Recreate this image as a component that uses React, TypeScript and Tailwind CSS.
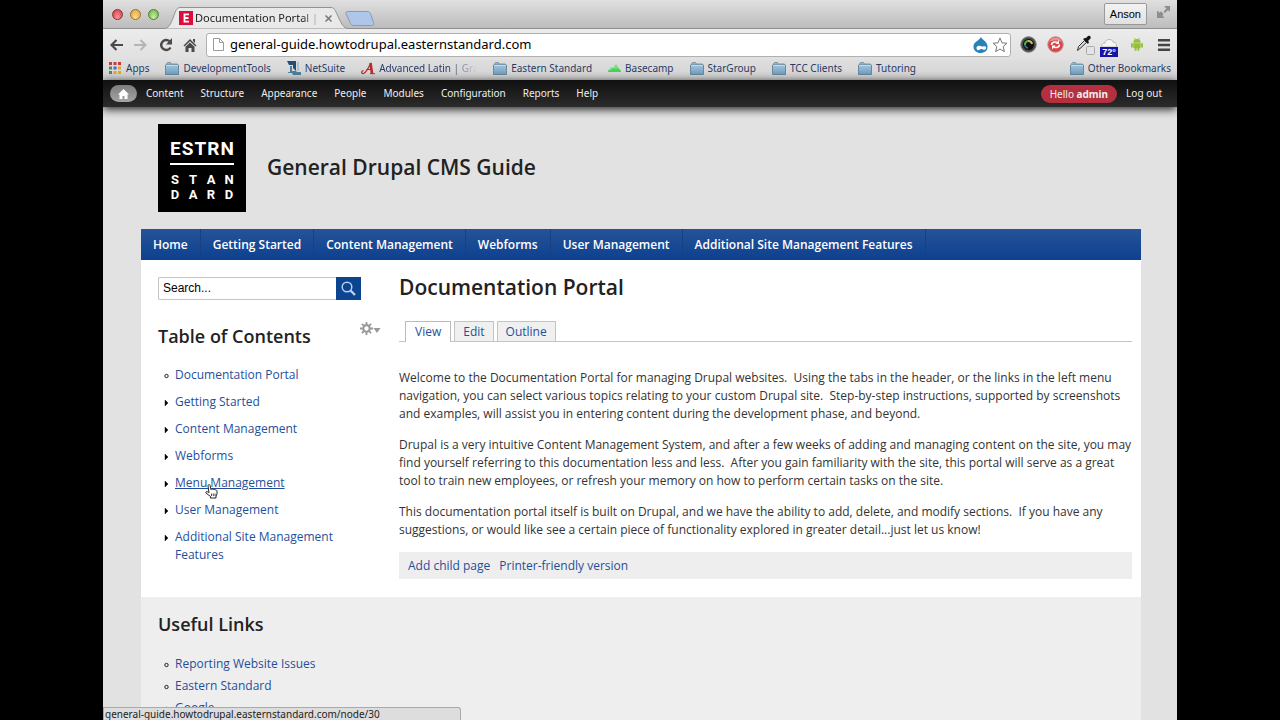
import type { ReactNode } from "react"

const ui = "font-['Noto_Sans',sans-serif]"

const adminLinks = ["Content", "Structure", "Appearance", "People", "Modules", "Configuration", "Reports", "Help"]
const navLinks = ["Home", "Getting Started", "Content Management", "Webforms", "User Management", "Additional Site Management Features"]
const toc = ["Documentation Portal", "Getting Started", "Content Management", "Webforms", "Menu Management", "User Management", "Additional Site Management Features"]
const usefulLinks = ["Reporting Website Issues", "Eastern Standard", "Google"]

const FolderIcon = () => (
  <svg width="14" height="13" viewBox="0 0 14 13" className="shrink-0">
    <defs>
      <linearGradient id="folder" x1="0" y1="0" x2="0" y2="1">
        <stop offset="0" stopColor="#a3c3d8" />
        <stop offset="1" stopColor="#6d9dbd" />
      </linearGradient>
    </defs>
    <path d="M1.5 3V1.500L2.500.500h3l1 1.500h6v1" fill="#8fb3ca" stroke="#7b98a9" />
    <path d="M.5 3h13v9.500H.5z" fill="url(#folder)" stroke="#6689a0" />
    <path d="M1 3.500h12" stroke="#c6dbe8" />
  </svg>
)

const AppsIcon = () => (
  <svg width="12" height="12" viewBox="0 0 12 12" className="shrink-0">
    {["#c8373a", "#c8373a", "#c8373a", "#3f8f5c", "#3f6fc0", "#e0a52d", "#3f8f5c", "#e0a52d", "#e0a52d"].map((c, i) => (
      <rect key={i} x={(i % 3) * 4.5} y={Math.floor(i / 3) * 4.5} width="3" height="3" fill={c} />
    ))}
  </svg>
)

const NetSuiteIcon = () => (
  <svg width="14" height="14" viewBox="0 0 14 14" className="shrink-0">
    <path d="M0 0h9v10L6 7V4H2z" fill="#1f4d74" />
    <path d="M3 5h2v5h4l1 1h4v3H6L5 12H1v-1h2z" fill="#4d7fa0" />
    <path d="M10 1h2v9h-2z" fill="#a9c0cf" />
  </svg>
)

const LatinIcon = () => (
  <svg width="14" height="13" viewBox="0 0 14 13" fill="none" stroke="#b8282c" className="shrink-0">
    <path d="M2.500 8.500C0 9 0 12 2.500 11.500S6 8 10 1" strokeWidth="1.2" />
    <path d="M9.500 1l1.500 10.500" strokeWidth="2.6" />
    <path d="M5.500 7.500h5M9 11.700h5" strokeWidth="1" />
  </svg>
)

const BasecampIcon = () => (
  <svg width="13" height="12" viewBox="0 0 13 12" className="shrink-0">
    <path d="M0 9l3-4 2 1 3-4 5 7v1H0z" fill="#7be083" />
    <path d="M0 8.500l3-.5 2-2 3 1 2-1 3 3v1H0z" fill="#4bd15a" />
  </svg>
)

const bookmarks: { label: string; icon: ReactNode }[] = [
  { label: "DevelopmentTools", icon: <FolderIcon /> },
  { label: "NetSuite", icon: <NetSuiteIcon /> },
  { label: "Advanced Latin | Gra", icon: <LatinIcon /> },
  { label: "Eastern Standard", icon: <FolderIcon /> },
  { label: "Basecamp", icon: <BasecampIcon /> },
  { label: "StarGroup", icon: <FolderIcon /> },
  { label: "TCC Clients", icon: <FolderIcon /> },
  { label: "Tutoring", icon: <FolderIcon /> },
]

const TabStrip = () => (
  <div className="flex h-[29px] items-end bg-linear-to-b from-[#e0e0e0] to-[#bcbcbc] border-b border-[#8f8f8f]">
    <div className="flex h-full items-center gap-[7px] pl-[9px]">
      <button aria-label="Close window" className="size-[11px] rounded-full border border-[#8e2f36] bg-radial-[at_50%_80%] from-[#f79a9a] to-[#d5303c]" />
      <button aria-label="Minimize window" className="size-[11px] rounded-full border border-[#99702c] bg-radial-[at_50%_80%] from-[#fbe08d] to-[#e09a33]" />
      <button aria-label="Zoom window" className="size-[11px] rounded-full border border-[#4e7f35] bg-radial-[at_50%_80%] from-[#cdf0a0] to-[#62ae3d]" />
    </div>
    <div className="relative -mb-px ml-[6px] h-[22px] w-[183px]">
      <svg width="183" height="22" viewBox="0 0 183 22" className="absolute inset-0">
        <path d="M0 21.500C5 20 6 16 8 11S11 .5 15 .5h151c4 0 5 5 8 11s4 9 9 10" fill="#e9e9e9" stroke="#929292" />
      </svg>
      <div className={`relative flex h-full items-center pl-[14px] text-[11px] text-[#222] ${ui}`}>
        <svg width="14" height="14" viewBox="0 0 14 14" className="shrink-0">
          <rect width="14" height="14" fill="#dc0d3c" />
          <path d="M5.500 2.500v9M5 3.300h5M5 7h4.500M5 10.700h5" stroke="#fff" strokeWidth="1.800" fill="none" />
        </svg>
        <span className="ml-[2px] w-[126px] overflow-hidden whitespace-nowrap mask-r-from-85%">Documentation Portal | General</span>
        <button aria-label="Close tab" className="ml-[4px]">
          <svg width="7" height="7" viewBox="0 0 7 7" stroke="#777" strokeWidth="1.500"><path d="M.5.500l6 6M6.500.500l-6 6" /></svg>
        </button>
      </div>
    </div>
    <button aria-label="New tab" className="-ml-[3px] mb-[2px]">
      <svg width="30" height="15" viewBox="0 0 30 15">
        <path d="M2.500.500h20c2 0 2.500 1 3 2l3 9c.5 2 0 3-2 3H9c-2 0-3-1-3.500-2L1 3C.5 1.500 1 .5 2.500.500z" fill="#aec6ea" stroke="#8d99ae" />
      </svg>
    </button>
    <div className="ml-auto flex h-full items-center gap-[10px] pr-[7px]">
      <button className="h-[22px] rounded-[2px] border border-[#999] bg-linear-to-b from-[#f3f3f3] to-[#e0e0e0] px-[5px] font-['Liberation_Sans',sans-serif] text-[11px] text-black">Anson</button>
      <button aria-label="Full screen" className="mb-[4px]">
        <svg width="13" height="13" viewBox="0 0 13 13" fill="#8d8d8d">
          <path d="M7 0h6v6l-2-2-3 3-1.500-1.500L9.500 2.500zM0 5h1.500v2L4 5.500 6.500 8 5 10.500h2V12H0z" />
        </svg>
      </button>
    </div>
  </div>
)

const Toolbar = () => (
  <div className="flex h-[31px] items-center bg-linear-to-b from-[#ececec] to-[#e0e0e0] px-[7px]">
    <button aria-label="Back">
      <svg width="13" height="12" viewBox="0 0 13 12" fill="none" stroke="#4a4a4a" strokeWidth="2.200"><path d="M13 6H2M6.500 1l-5 5 5 5" /></svg>
    </button>
    <button aria-label="Forward" className="ml-[11px]">
      <svg width="13" height="12" viewBox="0 0 13 12" fill="none" stroke="#b5b5b5" strokeWidth="2"><path d="M0 6h11M6.500 1l5 5-5 5" /></svg>
    </button>
    <button aria-label="Reload" className="ml-[12px]">
      <svg width="14" height="14" viewBox="0 0 14 14"><path d="M11.500 9.500A5 5 0 1 1 10.500 3.200" fill="none" stroke="#4a4a4a" strokeWidth="2.400" /><path d="M13 0v6.500H7z" fill="#4a4a4a" /></svg>
    </button>
    <button aria-label="Home page" className="ml-[10px]">
      <svg width="14" height="14" viewBox="0 0 14 14" fill="#4a4a4a"><path d="M7 1l6.500 6.500-1 1L7 3.200 1.500 8.500l-1-1zM10 1h2v4l-2-2zM7 4.500l4.500 4.300V14H8.500v-4h-3v4h-3V8.800z" /></svg>
    </button>
    <div className="ml-[9px] flex h-[24px] min-w-0 flex-1 items-center rounded-[3px] border border-[#b0b0b0] bg-white pl-[6px] pr-[2px]">
      <svg width="11" height="13" viewBox="0 0 11 13" fill="#fff" stroke="#9a9a9a" className="shrink-0"><path d="M.5.500h6l4 4v8H.5zM6.500.500v4h4" /></svg>
      <input aria-label="Address" defaultValue="general-guide.howtodrupal.easternstandard.com" className={`ml-[6px] min-w-0 flex-1 text-[13px] text-black outline-none ${ui}`} />
      <svg width="15" height="16" viewBox="0 0 15 16" className="shrink-0">
        <path d="M8 0c1 3 6 4 6.500 9S11 16 7.500 16 0 13.500.5 9 6 4 8 0z" fill="#2584b5" />
        <path d="M5 9c3-1 3 1 5 .5s4 0 3 2-3 1-4.500.5S6 14 4.500 13 3 9.500 5 9z" fill="#fff" />
      </svg>
      <button aria-label="Bookmark this page" className="ml-[4px]">
        <svg width="16" height="16" viewBox="0 0 16 16" fill="#fff" stroke="#777"><path d="M8 1l2 4.800 5 .4-3.800 3.400 1.200 5L8 12l-4.400 2.600 1.200-5L1 6.200l5-.4z" /></svg>
      </button>
    </div>
    <div className="ml-[9px] flex items-center">
      <button aria-label="Camera">
        <svg width="17" height="17" viewBox="0 0 17 17" fill="none">
          <circle cx="8.500" cy="8.500" r="7.700" fill="#4a4a4a" stroke="#777" />
          <circle cx="8.500" cy="8.500" r="5.500" fill="#111" />
          <path d="M5 9a3.500 3.500 0 0 1 3-4" stroke="#49b94a" strokeWidth="2" />
          <path d="M8 5a3.500 3.500 0 0 1 4 3" stroke="#c9c05a" strokeWidth="2" />
          <path d="M5 9a3.500 3.500 0 0 0 3 3" stroke="#3c6cc0" strokeWidth="1.600" />
        </svg>
      </button>
      <button aria-label="Sync" className="ml-[10px]">
        <svg width="17" height="17" viewBox="0 0 17 17" fill="none">
          <circle cx="8.500" cy="8.500" r="7.700" fill="#dc4548" stroke="#c78486" />
          <path d="M2 6a7 7 0 0 1 13 0c-4-2-9-2-13 0z" fill="#ee8f8f" />
          <path d="M4.500 9C4.500 6 8 5.500 10 6.500M12.500 8.500c0 3-3.500 3.500-5.500 2.500" stroke="#fff" strokeWidth="1.600" />
          <path d="M12 4v4H8.500zM5 13.500v-4h3.500z" fill="#fff" />
        </svg>
      </button>
      <button aria-label="Color picker" className="ml-[13px]">
        <svg width="18" height="20" viewBox="0 0 18 20">
          <path d="M.5 15.500l1-4 6-6 2 2-6.500 6z" fill="#d8d8d8" stroke="#333" />
          <path d="M6 4l5 5 1-2-1-1 2.500-2.500c1-2-1-3.500-2.500-2.500L9 3 8 3z" fill="#151515" />
          <rect x="9.500" y="11.500" width="8" height="8" rx="1" fill="#e4e4e4" stroke="#aaa" />
        </svg>
      </button>
      <button aria-label="Weather, 72 degrees" className="ml-[5px] flex flex-col items-center pt-[6px]">
        <svg width="16" height="8" viewBox="0 0 16 8"><path d="M1 8c-1-3 1-4 3-4 0-4 7-5 8-1 3 0 4 2 3.500 5z" fill="#f5f5f5" stroke="#b8b8b8" /></svg>
        <span className="h-[10px] w-[18px] bg-[#1713a8] font-['Liberation_Sans',sans-serif] text-[9px] leading-[10px] font-bold text-white">72°</span>
      </button>
      <button aria-label="Android" className="ml-[13px]">
        <svg width="12" height="13" viewBox="0 0 13 14" fill="#97bf3c">
          <path d="M2.500 5a4 4 0 0 1 8 0zM2.500 5.600h8v5.400h-8z" />
          <rect x="0" y="5.500" width="2" height="5" rx="1" /><rect x="11" y="5.500" width="2" height="5" rx="1" />
          <rect x="4" y="9" width="2" height="5" rx="1" /><rect x="7" y="9" width="2" height="5" rx="1" />
          <path d="M3.500 0l1.500 2M9.500 0L8 2" stroke="#97bf3c" />
        </svg>
      </button>
      <button aria-label="Menu" className="ml-[15px]">
        <svg width="12" height="12" viewBox="0 0 12 12" fill="#444"><path d="M0 0h12v2.500H0zM0 4.700h12v2.500H0zM0 9.400h12v2.500H0z" /></svg>
      </button>
    </div>
  </div>
)

const BookmarksBar = () => (
  <div className={`flex h-[20px] items-start bg-linear-to-b from-[#dedede] to-[#d2d2d2] px-[6px] text-[10px] leading-[16px] text-[#273a66] ${ui}`}>
    <a href="#" className="flex items-center gap-[5px]"><AppsIcon />Apps</a>
    {bookmarks.map((b) => (
      <a key={b.label} href="#" className="ml-[16px] flex items-center gap-[4px] whitespace-nowrap">
        {b.icon}
        {b.label.includes("|") ? <span className="w-[98px] overflow-hidden mask-r-from-70%">{b.label}</span> : b.label}
      </a>
    ))}
    <a href="#" className="ml-auto flex items-center gap-[4px]"><FolderIcon />Other Bookmarks</a>
  </div>
)

const AdminMenu = () => (
  <div className={`relative z-10 flex h-[27px] items-center bg-linear-to-b from-[#111] to-[#2b2b2b] px-[7px] text-[10px] text-[#eee] shadow-[0_2px_10px_rgba(0,0,0,0.9)] ${ui}`}>
    <a href="#" aria-label="Home" className="flex h-[17px] w-[27px] items-center justify-center rounded-full bg-linear-to-b from-[#7d7d7d] to-[#a5a5a5]">
      <svg width="11" height="10" viewBox="0 0 11 10" fill="#fff"><path d="M5.500 0L11 5.500H9.500V10h-3V7h-2v3h-3V5.500H0z" /></svg>
    </a>
    <nav className="ml-[9px] flex gap-[17px]">
      {adminLinks.map((l) => <a key={l} href="#">{l}</a>)}
    </nav>
    <a href="#" className="ml-auto rounded-full bg-[#b5303f] px-[9px] leading-[18px]">Hello <b>admin</b></a>
    <a href="#" className="ml-[9px] pr-[8px]">Log out</a>
  </div>
)

const SiteHeader = () => (
  <header className="pl-[38px] pr-9">
    <div className="flex items-center gap-[21px] pl-[17px] pt-[17px] pb-[17px]">
      <a href="#" aria-label="Eastern Standard" className="flex size-[88px] flex-col bg-black px-[12px] pt-[15px] font-['Roboto',sans-serif] font-bold text-white">
        <div className="flex justify-between text-[19px] leading-[20px]">
          {"ESTRN".split("").map((c, i) => <span key={i}>{c}</span>)}
        </div>
        <div className="mt-[4px] mb-[7px] h-[2px] shrink-0 bg-white" />
        {["STAN", "DARD"].map((row) => (
          <div key={row} className="flex justify-between text-[13px] leading-[15px]">
            {row.split("").map((c, i) => <span key={i} className="w-[10px] text-center">{c}</span>)}
          </div>
        ))}
      </a>
      <h1 className="text-[21px] font-semibold text-[#222]">General Drupal CMS Guide</h1>
    </div>
    <nav className="flex h-[31px] bg-linear-to-b from-[#265399] to-[#0c4090] text-[12px] font-semibold text-white">
      {navLinks.map((l) => (
        <a key={l} href="#" className="flex items-center border-r border-[#17427f] px-[12px]">{l}</a>
      ))}
    </nav>
  </header>
)

const Bullet = ({ open }: { open: boolean }) => (
  <svg width="5" height="8" viewBox="0 0 5 8" className="mt-[6px] shrink-0">
    {open ? <circle cx="2.500" cy="4" r="1.700" fill="none" stroke="#222" /> : <path d="M1 1l3 3-3 3z" fill="#000" stroke="#000" strokeWidth=".4" />}
  </svg>
)

const HandCursor = () => (
  <svg width="13" height="15" viewBox="0 0 13 15" className="absolute top-[10px] left-[41px]">
    <path d="M3 2c0-2 2-2 2.200 0L6 5.500c.4-1 1.800-.8 2 .2.500-.8 1.700-.5 2 .3 1-.5 2 .2 2 1.200v2.600L11 12v2H5.500v-1.500L1 9c-.8-1 .5-2 1.500-1.200L4 8.500z" fill="#fff" stroke="#222" />
    <path d="M6.500 9.500v2.500M8.300 9.500v2.500M10 9.500v2.500" stroke="#222" strokeWidth=".8" />
  </svg>
)

const Sidebar = () => (
  <aside className="w-[223px] shrink-0">
    <form className="mt-[17px] flex h-[23px] w-[203px]">
      <input aria-label="Search" defaultValue="Search..." className="min-w-0 flex-1 rounded-l-[2px] border border-r-0 border-[#c4c4c4] bg-white px-[4px] pb-[2px] font-['Liberation_Sans',sans-serif] text-[12px] text-black outline-none" />
      <button type="button" aria-label="Submit search" className="flex w-[25px] items-center justify-center bg-[#0c4490]">
        <svg width="15" height="15" viewBox="0 0 15 15" fill="none" stroke="#b8d0f2"><circle cx="6" cy="6" r="4.800" strokeWidth="1.500" /><path d="M9.500 9.500l4.500 4.500" strokeWidth="2.400" /></svg>
      </button>
    </form>
    <div className="mt-[20px] flex items-start justify-between">
      <h2 className="text-[18px] leading-[32px] font-semibold text-[#222]">Table of Contents</h2>
      <button aria-label="Configure block" className="flex items-center pt-[2px]">
        <svg width="13" height="13" viewBox="0 0 13 13" fill="none" stroke="#999">
          <circle cx="6.500" cy="6.500" r="3.300" strokeWidth="2.200" />
          <path d="M6.500 0v2.500M6.500 10.500V13M0 6.500h2.500M10.500 6.500H13M1.900 1.900l1.800 1.800M9.300 9.300l1.800 1.800M1.900 11.100l1.800-1.800M9.300 3.700l1.800-1.800" strokeWidth="1.800" />
        </svg>
        <svg width="8" height="5" viewBox="0 0 8 5" className="mt-[3px]"><path d="M.5 0h7L4 5z" fill="#999" /></svg>
      </button>
    </div>
    <ul className="mt-[14px] flex flex-col gap-[9px] pl-[6px] pr-[36px] text-[12px] leading-[18px] text-[#1f4f9b]">
      {toc.map((t) => (
        <li key={t} className="relative flex gap-[6px]">
          <Bullet open={t === "Documentation Portal"} />
          <a href="#" className={t === "Menu Management" ? "underline" : ""}>{t}</a>
          {t === "Menu Management" && <HandCursor />}
        </li>
      ))}
    </ul>
  </aside>
)

const Article = () => (
  <main className="min-w-0 flex-1 pt-[11px]">
    <h2 className="text-[21px] leading-[32px] font-semibold text-[#222]">Documentation Portal</h2>
    <div className="mt-[18px] flex gap-[3px] border-b border-[#c4c4c4] pl-[6px] text-[12px] text-[#1f4f9b]">
      <a href="#" className="-mb-px border border-b-0 border-[#bbb] bg-white px-[9px] leading-[20px]">View</a>
      <a href="#" className="border border-b-0 border-[#c4c4c4] bg-[#f0f0f0] px-[8px] leading-[19px]">Edit</a>
      <a href="#" className="border border-b-0 border-[#c4c4c4] bg-[#f0f0f0] px-[8px] leading-[19px]">Outline</a>
    </div>
    <div className="mt-[27px] flex flex-col gap-[13px] text-[12px] leading-[18px] text-[#333]">
      <p>Welcome to the Documentation Portal for managing Drupal websites.&nbsp; Using the tabs in the header, or the links in the left menu navigation, you can select various topics relating to your custom Drupal site.&nbsp; Step-by-step instructions, supported by screenshots and examples, will assist you in entering content during the development phase, and beyond.</p>
      <p>Drupal is a very intuitive Content Management System, and after a few weeks of adding and managing content on the site, you may find yourself referring to this documentation less and less.&nbsp; After you gain familiarity with the site, this portal will serve as a great tool to train new employees, or refresh your memory on how to perform certain tasks on the site.</p>
      <p>This documentation portal itself is built on Drupal, and we have the ability to add, delete, and modify sections.&nbsp; If you have any suggestions, or would like see a certain piece of functionality explored in greater detail...just let us know!</p>
    </div>
    <div className="mt-[13px] flex gap-[9px] bg-[#eee] px-[9px] text-[12px] leading-[27px] text-[#1f4f9b]">
      <a href="#">Add child page</a>
      <a href="#">Printer-friendly version</a>
    </div>
  </main>
)

export default function App() {
  return (
    <div className="h-screen bg-black px-[103px]">
      <div className="relative h-full overflow-hidden bg-[#e2e2e2] font-['Open_Sans',sans-serif]">
        <TabStrip />
        <Toolbar />
        <BookmarksBar />
        <AdminMenu />
        <SiteHeader />
        <div className="ml-[38px] mr-9">
          <div className="flex gap-[18px] bg-white pl-[17px] pr-[9px] pb-[18px]">
            <Sidebar />
            <Article />
          </div>
          <section className="bg-[#eee] pl-[17px] pt-[11px] pb-10">
            <h2 className="text-[18px] leading-[32px] font-semibold text-[#222]">Useful Links</h2>
            <ul className="mt-[15px] flex flex-col gap-[4px] pl-[6px] text-[12px] leading-[18px] text-[#1f4f9b]">
              {usefulLinks.map((l) => (
                <li key={l} className="flex gap-[6px]"><Bullet open /><a href="#">{l}</a></li>
              ))}
            </ul>
          </section>
        </div>
        <div className={`absolute bottom-0 left-0 h-[13px] w-[358px] rounded-tr-[3px] border border-b-0 border-[#aaa] bg-[#ddd] pl-px text-[10px] leading-[13px] text-[#222] ${ui}`}>general-guide.howtodrupal.easternstandard.com/node/30</div>
      </div>
    </div>
  )
}
